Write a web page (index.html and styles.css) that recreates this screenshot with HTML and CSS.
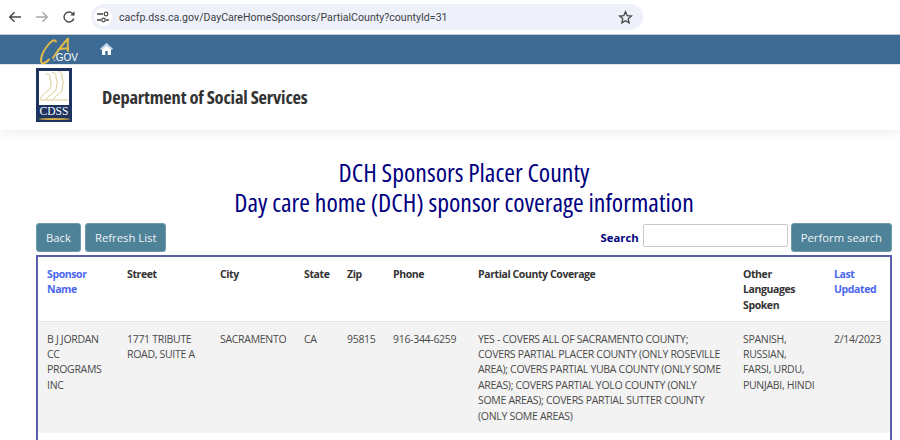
FILE: index.html
```html
<!DOCTYPE html>
<html lang="en">
<head>
    <meta charset="UTF-8">
    <meta name="viewport" content="width=device-width, initial-scale=1.0">
    <title>DCH Sponsors Placer County</title>
    <link rel="stylesheet" href="styles.css">
</head>
<body>
    <div class="browser-bar">
        <svg class="nav-icon" width="16" height="16" viewBox="0 0 16 16"><path d="M14 8H3M7.500 3.200 2.700 8l4.800 4.800" fill="none" stroke="#474747" stroke-width="1.400"/></svg>
        <svg class="nav-icon" width="16" height="16" viewBox="0 0 16 16"><path d="M2 8h11M8.500 3.200 13.300 8l-4.800 4.800" fill="none" stroke="#a8a8a8" stroke-width="1.400"/></svg>
        <svg class="nav-icon" width="16" height="16" viewBox="0 0 16 16"><path d="M12.800 9.500A5 5 0 1 1 11.600 4.500L13 6" fill="none" stroke="#474747" stroke-width="1.400"/><path d="M13.500 2.300v4.200H9.300z" fill="#474747"/></svg>
        <div class="address">
            <span class="site-chip">
                <svg width="14" height="14" viewBox="0 0 14 14"><path d="M1 4h6M10 10h3M1 10h4" stroke="#474747" stroke-width="1.300" fill="none"/><circle cx="10" cy="4" r="1.800" fill="none" stroke="#474747" stroke-width="1.200"/><circle cx="7.500" cy="10" r="1.800" fill="none" stroke="#474747" stroke-width="1.200"/></svg>
            </span>
            <span class="url">cacfp.dss.ca.gov/DayCareHomeSponsors/PartialCounty?countyId=31</span>
            <svg class="star" width="15" height="15" viewBox="0 0 16 16"><path d="M8 1.800 9.800 6l4.500.4-3.400 3 1 4.400L8 11.500l-3.900 2.300 1-4.400-3.400-3L6.200 6z" fill="none" stroke="#474747" stroke-width="1.400"/></svg>
        </div>
    </div>

    <nav class="top-nav">
        <div class="ca-logo">
            <svg width="38" height="29" viewBox="0 0 38 29"><path d="M16 4.500C14.500 2 11 4 8 8 4 13 .8 19 1 24c.2 3.500 4 3 8-1.500M28 1.500C22 8 17 15 13 21M28 1.500c-.3 4-.3 8 0 12.500M18.500 12.500c3-1 6-1.300 9.500-1" fill="none" stroke="#e0bb4c" stroke-width="2" stroke-linecap="round"/></svg>
            <span class="ca-gov">.GOV</span>
        </div>
        <svg class="home-icon" width="13" height="12" viewBox="0 0 13 12"><path d="M2 6.200V12h3.300V8h2.400v4H11V6.200L6.500 2.300z" fill="#fff"/><path d="M.6 6.400 6.500 1l5.900 5.400" fill="none" stroke="#cfe3f5" stroke-width="1.500"/></svg>
    </nav>

    <header class="site-header">
        <div class="cdss-logo">
            <div class="cdss-art">
                <svg width="30" height="34" viewBox="0 0 30 34"><path d="M7 3c3-1 4 1 4 4s2 4 1 6 0 5-2 6-7 5-9 9M13 2c3-1 4 1 4 4s2 5 1 7 0 5-2 7-7 5-9 8M19 1c3-1 4 1 4 4s2 6 1 8 0 6-2 8-6 5-8 7M1 29h28" fill="none" stroke="#dcc88f" stroke-width="1"/></svg>
            </div>
            <span class="cdss-name">CDSS</span>
            <span class="cdss-swoosh"></span>
        </div>
        <div class="dept-name">Department of Social Services</div>
    </header>

    <main class="content">
        <h1>DCH Sponsors Placer County<br>Day care home (DCH) sponsor coverage information</h1>

        <div class="toolbar">
            <div class="toolbar-left">
                <button class="btn">Back</button>
                <button class="btn">Refresh List</button>
            </div>
            <div class="toolbar-right">
                <label class="search-label" for="search">Search</label>
                <input id="search" class="search-input" type="text">
                <button class="btn">Perform search</button>
            </div>
        </div>

        <div class="table-box">
            <table>
                <thead>
                    <tr>
                        <th class="col-name link-head">Sponsor Name</th>
                        <th class="col-street">Street</th>
                        <th class="col-city">City</th>
                        <th class="col-state">State</th>
                        <th class="col-zip">Zip</th>
                        <th class="col-phone">Phone</th>
                        <th class="col-cover">Partial County Coverage</th>
                        <th class="col-lang">Other Languages Spoken</th>
                        <th class="col-date link-head">Last Updated</th>
                    </tr>
                </thead>
                <tbody>
                    <tr>
                        <td>B J JORDAN CC PROGRAMS INC</td>
                        <td>1771 TRIBUTE ROAD, SUITE A</td>
                        <td>SACRAMENTO</td>
                        <td>CA</td>
                        <td>95815</td>
                        <td>916-344-6259</td>
                        <td>YES - COVERS ALL OF SACRAMENTO COUNTY; COVERS PARTIAL PLACER COUNTY (ONLY ROSEVILLE AREA); COVERS PARTIAL YUBA COUNTY (ONLY SOME AREAS); COVERS PARTIAL YOLO COUNTY (ONLY SOME AREAS); COVERS PARTIAL SUTTER COUNTY (ONLY SOME AREAS)</td>
                        <td>SPANISH, RUSSIAN, FARSI, URDU, PUNJABI, HINDI</td>
                        <td>2/14/2023</td>
                    </tr>
                </tbody>
            </table>
        </div>
    </main>
</body>
</html>
```

FILE: styles.css
```css
html, body {
    height: 440px;
    overflow: hidden;
}
body {
    margin: 0;
    font-family: "Open Sans", "Noto Sans", sans-serif;
    background-color: #fff;
    color: #333;
}

/* browser chrome */
.browser-bar {
    height: 35px;
    box-sizing: border-box;
    display: flex;
    align-items: center;
    padding: 0 0 1px 7px;
    gap: 11px;
    border-bottom: 1px solid #c9ccd1;
}
.nav-icon {
    flex: none;
}
.address {
    width: 552px;
    height: 26px;
    margin-left: 3px;
    margin-top: 1px;
    display: flex;
    align-items: center;
    background-color: #eef1fa;
    border-radius: 13px;
}
.site-chip {
    width: 18px;
    height: 18px;
    margin-left: 3px;
    border-radius: 50%;
    background-color: #fff;
    display: flex;
    align-items: center;
    justify-content: center;
}
.url {
    margin-left: 7px;
    font-family: "Roboto", sans-serif;
    font-size: 10.600px;
    color: #3c4043;
    white-space: nowrap;
    flex: 1;
}
.star {
    margin-right: 10px;
}

/* blue nav */
.top-nav {
    height: 29px;
    background-color: #3e6b94;
    display: flex;
    align-items: center;
    padding-left: 40px;
    border-bottom: 1px solid #e3e8ef;
}
.ca-logo {
    position: relative;
    width: 38px;
    height: 29px;
}
.ca-logo svg {
    display: block;
    margin-top: 2px;
}
.ca-gov {
    position: absolute;
    left: 13px;
    top: 17px;
    font-family: "Liberation Sans", sans-serif;
    font-size: 10px;
    line-height: 11px;
    color: #fff;
}
.home-icon {
    margin-left: 22px;
    margin-bottom: 1px;
}

/* department header */
.site-header {
    height: 65px;
    display: flex;
    align-items: center;
    padding-left: 36px;
    box-shadow: 0 4px 10px rgba(0, 0, 0, 0.06);
}
.cdss-logo {
    width: 36px;
    height: 54px;
    box-sizing: border-box;
    background-color: #1d3461;
    padding: 3px 3px 0;
    align-self: flex-start;
    margin-top: 3px;
    display: flex;
    flex-direction: column;
    align-items: center;
}
.cdss-art {
    width: 30px;
    height: 34px;
    background-color: #fff;
    overflow: hidden;
    flex: none;
}
.cdss-art svg {
    display: block;
}
.cdss-name {
    font-family: "Liberation Serif", serif;
    font-size: 11.500px;
    line-height: 11px;
    color: #fff;
    margin-top: 1px;
}
.cdss-swoosh {
    width: 31px;
    height: 2px;
    margin-top: 1px;
    background-color: #d0ab45;
    border-radius: 50%;
}
.dept-name {
    margin-left: 30px;
    margin-bottom: 2px;
    font-size: 18.500px;
    font-weight: 700;
    font-stretch: 75%;
    color: #333;
    letter-spacing: -0.2px;
}

/* main */
.content {
    padding: 0 8px 0 36px;
}
h1 {
    margin: 27px 0 0;
    text-align: center;
    font-size: 25.800px;
    font-weight: 400;
    font-stretch: 75%;
    line-height: 30px;
    color: #000080;
}
.toolbar {
    margin-top: 6px;
    display: flex;
    justify-content: space-between;
    align-items: center;
}
.toolbar-left, .toolbar-right {
    display: flex;
    align-items: center;
}
.toolbar-left {
    gap: 4px;
}
.btn {
    height: 29px;
    padding: 0 9px;
    font-family: inherit;
    font-size: 11.300px;
    color: #eef3f6;
    background-color: #4e8299;
    border: 1px solid #6e99ab;
    border-radius: 3px;
}
.search-label {
    font-size: 11.300px;
    font-weight: 700;
    color: #000080;
    margin-right: 4px;
}
.search-input {
    width: 145px;
    height: 23px;
    box-sizing: border-box;
    margin: 0 3px 4px 0;
    border: 1px solid #c8c8c8;
    border-radius: 2px;
}

/* table */
.table-box {
    margin-top: 3px;
    border: 2px solid #5a5ea6;
    border-bottom: none;
    height: 200px;
}
table {
    width: 100%;
    border-collapse: collapse;
    table-layout: fixed;
    font-size: 10.500px;
    line-height: 15.400px;
}
th, td {
    box-sizing: border-box;
    padding: 10px 9px 0 9px;
    text-align: left;
    vertical-align: top;
}
th {
    height: 64px;
    font-weight: 700;
    letter-spacing: -0.4px;
    color: #333;
}
td {
    height: 112px;
    background-color: #f3f3f3;
    color: #4a4a4a;
    letter-spacing: -0.3px;
}
thead tr {
    border-bottom: 1px solid #e6e6e6;
}
.link-head {
    color: #4a66f0;
}
.col-name { width: 80px; }
.col-street { width: 93px; }
.col-city { width: 84px; }
.col-state { width: 43px; }
.col-zip { width: 46px; }
.col-phone { width: 85px; }
.col-cover { width: 265px; }
.col-lang { width: 91px; }
```
